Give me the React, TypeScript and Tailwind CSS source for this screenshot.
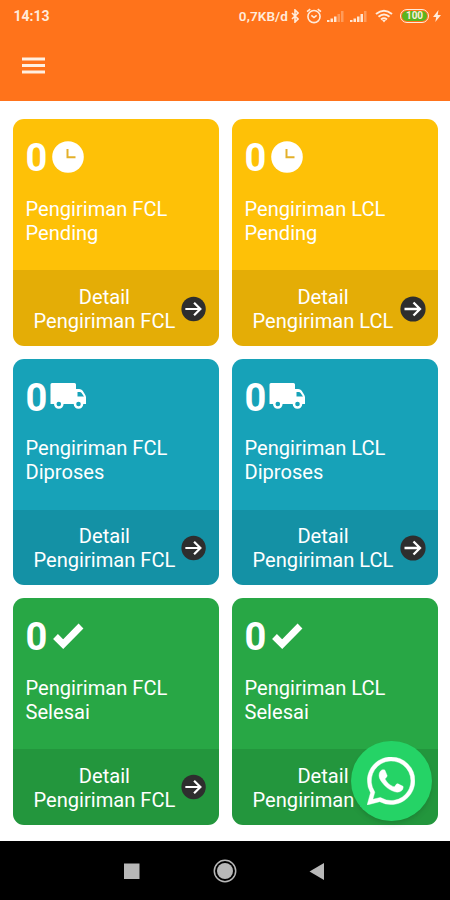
import React from 'react'

type Kind = 'pending' | 'process' | 'done'

const cards: { kind: Kind; type: string; status: string; bg: string }[] = [
  { kind: 'pending', type: 'FCL', status: 'Pending', bg: 'bg-[#fec107]' },
  { kind: 'pending', type: 'LCL', status: 'Pending', bg: 'bg-[#fec107]' },
  { kind: 'process', type: 'FCL', status: 'Diproses', bg: 'bg-[#17a2b8]' },
  { kind: 'process', type: 'LCL', status: 'Diproses', bg: 'bg-[#17a2b8]' },
  { kind: 'done', type: 'FCL', status: 'Selesai', bg: 'bg-[#28a745]' },
  { kind: 'done', type: 'LCL', status: 'Selesai', bg: 'bg-[#28a745]' },
]

const StatusIcon: React.FC<{ kind: Kind }> = ({ kind }) => {
  if (kind === 'pending') {
    return (
      <svg className="mb-0.5 ml-[5px] size-8" viewBox="0 0 32 32">
        <circle cx="16" cy="16" r="15.8" fill="#fff" />
        <path d="M15.5 8v8.3H23.5" fill="none" stroke="#e3b02a" strokeWidth="2" />
      </svg>
    )
  }
  if (kind === 'process') {
    return (
      <svg className="mb-0.5 ml-[3px] h-[27px] w-9" viewBox="0 0 36 27">
        <path
          d="M2 0h22.5q1.500 0 1.500 1.500V6h3.200q2.200 0 3.500 1.800L35 11.500q1 1.500 1 3v6.500h-2.700a4.800 4.800 0 0 1-9.600 0H13.600a4.800 4.800 0 0 1-9.600 0H.5V1.500Q.5 0 2 0zM27.500 9v4.500H34l-2.400-3.500Q31 9 29.700 9zM8.800 18.700a2.300 2.300 0 1 0 0 4.600a2.300 2.300 0 1 0 0-4.600zM28.500 18.700a2.300 2.300 0 1 0 0 4.600a2.300 2.300 0 1 0 0-4.600z"
          fill="#fff"
          fillRule="evenodd"
        />
      </svg>
    )
  }
  return (
    <svg className="mb-0.5 ml-[5px] size-8" viewBox="0 0 32 32">
      <path d="M3.500 16.500l7.700 7.700L29 6" fill="none" stroke="#fff" strokeWidth="6.800" />
    </svg>
  )
}

const Signal: React.FC<{ dim: number }> = ({ dim }) => (
  <svg className="h-3 w-[17px]" viewBox="0 0 17 12" fill="#ffe6d2">
    {[2, 3.5, 5.5, 8, 11].map((h, i) => (
      <rect key={h} x={i * 3.5} y={12 - h} width="2.500" height={h} opacity={i >= 5 - dim ? 0.35 : 1} />
    ))}
  </svg>
)

const StatusBar: React.FC = () => (
  <div className="flex h-8 items-center justify-between pr-[9px] pl-[13.5px] text-[#ffebdb]">
    <span className="text-[14px] font-bold">14:13</span>
    <div className="flex items-center">
      <span className="text-[13.5px] font-semibold tracking-[0.1px]">0,7KB/d</span>
      <svg className="ml-[3px] h-3.5 w-2" viewBox="0 0 8 14" fill="none" stroke="currentColor" strokeWidth="1.600">
        <path d="M1 4l6 6-3 3V1l3 3-6 6" />
      </svg>
      <svg className="ml-[7px] size-4" viewBox="0 0 15 15" fill="none" stroke="currentColor" strokeWidth="1.500">
        <circle cx="7.500" cy="8" r="5.700" />
        <path d="M1 3.500L4 1M14 3.500L11 1M5 7l2.500 2L10 7" />
      </svg>
      <div className="ml-[5px] flex gap-[6px]">
        <Signal dim={2} />
        <Signal dim={1} />
      </div>
      <svg className="ml-[8px] h-[14px] w-[18px]" viewBox="0 0 18 13" fill="none" stroke="currentColor" strokeWidth="2">
        <path d="M1 4.500q8-6.500 16 0M3.500 7.300q5.500-4.500 11 0M6 10q3-2.400 6 0" />
        <path d="M7 10.500h4L9 13z" fill="currentColor" stroke="none" />
      </svg>
      <div className="ml-[7px] flex h-[14px] w-[29px] items-center justify-center rounded-full border-[1.5px] border-[#ffebdb] p-px">
        <span className="flex h-full w-full items-center justify-center rounded-full bg-[#5ab51e] text-[10px] leading-none font-bold">
          100
        </span>
      </div>
      <svg className="ml-[4px] h-3 w-2" viewBox="0 0 8 12" fill="currentColor">
        <path d="M5.500 0L0 7h3.200L2.300 12 8 5H4.700z" />
      </svg>
    </div>
  </div>
)

export default function App() {
  return (
    <div className="relative flex h-[900px] w-[450px] flex-col overflow-hidden bg-white font-['Roboto',sans-serif]">
      <header className="h-[100.5px] shrink-0 bg-[#ff731b]">
        <StatusBar />
        <svg className="mt-[25px] ml-[21.5px] h-[17px] w-[23px]" viewBox="0.5 0 23 17" fill="#fff0e2">
          <path d="M.5.5h23v3H.5zM.5 7h23v3H.5zM.5 13.500h23v3H.5z" />
        </svg>
      </header>

      <main className="grid grid-cols-2 gap-[13px] px-[12.5px] pt-[18.9px]">
        {cards.map(({ kind, type, status, bg }) => (
          <section key={type + status} className={`flex h-[226.4px] flex-col overflow-hidden rounded-[11px] text-white ${bg}`}>
            <div className="flex-1 px-[13px] pt-[19px]">
              <div className="flex h-10 items-center">
                <span className="text-[38px] leading-10 font-bold">0</span>
                <StatusIcon kind={kind} />
              </div>
              <p className="mt-[18.5px] text-[20.1px] leading-6">
                Pengiriman {type}
                <br />
                {status}
              </p>
            </div>
            <div className="flex h-[75.5px] items-center bg-black/10 pt-[2px] pr-3 pl-[21px]">
              <p className="flex-1 text-center text-[20.1px] leading-6 whitespace-nowrap">
                Detail
                <br />
                Pengiriman {type}
              </p>
              <svg className="mb-[1px] ml-1.5 size-[26px]" viewBox="0 0 26 26">
                <circle cx="13" cy="13" r="12.600" fill="#2e2e2e" />
                <path d="M4.500 13h15.500M13.500 6.500l6.500 6.500-6.500 6.500" fill="none" stroke="#fff" strokeWidth="2.300" />
              </svg>
            </div>
          </section>
        ))}
      </main>

      {/* Floating WhatsApp button */}
      <button className="absolute top-[740.5px] left-[351px] flex size-[80.5px] items-center justify-center rounded-full bg-[#25d366] shadow-md">
        <svg className="size-12" viewBox="0 0 24 24" fill="#fff" stroke="#fff" strokeWidth=".2">
          <path d="M.06 24l1.690-6.160a11.870 11.870 0 0 1-1.590-5.950C.16 5.340 5.500 0 12.050 0a11.820 11.820 0 0 1 8.410 3.490 11.820 11.820 0 0 1 3.480 8.410c0 6.560-5.340 11.890-11.890 11.890a11.900 11.900 0 0 1-5.690-1.450zM6.650 20.190l.38.230a9.870 9.870 0 0 0 5.020 1.370c5.450 0 9.890-4.430 9.890-9.880A9.890 9.890 0 1 0 3.690 17.150l.24.380-1 3.650zM18.040 14.730c-.07-.13-.27-.2-.57-.35s-1.760-.87-2.030-.97-.47-.15-.67.15-.77.97-.94 1.160-.35.220-.64.070-1.260-.46-2.390-1.470a8.960 8.960 0 0 1-1.650-2.060c-.17-.3-.02-.46.13-.61.130-.13.300-.35.450-.52s.200-.3.300-.5.050-.37-.02-.52-.67-1.610-.92-2.210c-.24-.58-.49-.5-.67-.51l-.57-.01c-.2 0-.52.070-.79.370S6.020 7.740 6.020 9.210s1.070 2.880 1.210 3.070 2.100 3.200 5.080 4.490c.71.310 1.260.49 1.690.63.710.230 1.360.190 1.870.120.570-.09 1.760-.72 2.010-1.410s.25-1.290.17-1.410z" />
        </svg>
      </button>

      {/* Android navigation bar */}
      <nav className="mt-auto flex h-[59px] shrink-0 items-center justify-center gap-[72px] bg-black">
        <svg className="size-[18px]" viewBox="0 0 18 18">
          <path d="M1 1.500h15.500V17H1z" fill="#b8b8b8" />
        </svg>
        <svg className="size-6" viewBox="0 0 24 24">
          <circle cx="12" cy="12" r="10.700" fill="none" stroke="#b8b8b8" strokeWidth="1.500" />
          <circle cx="12" cy="12" r="8" fill="#b8b8b8" />
        </svg>
        <svg className="size-[18px]" viewBox="0 0 18 18">
          <path d="M15 1v17L.5 9.500z" fill="#b8b8b8" />
        </svg>
      </nav>
    </div>
  )
}
